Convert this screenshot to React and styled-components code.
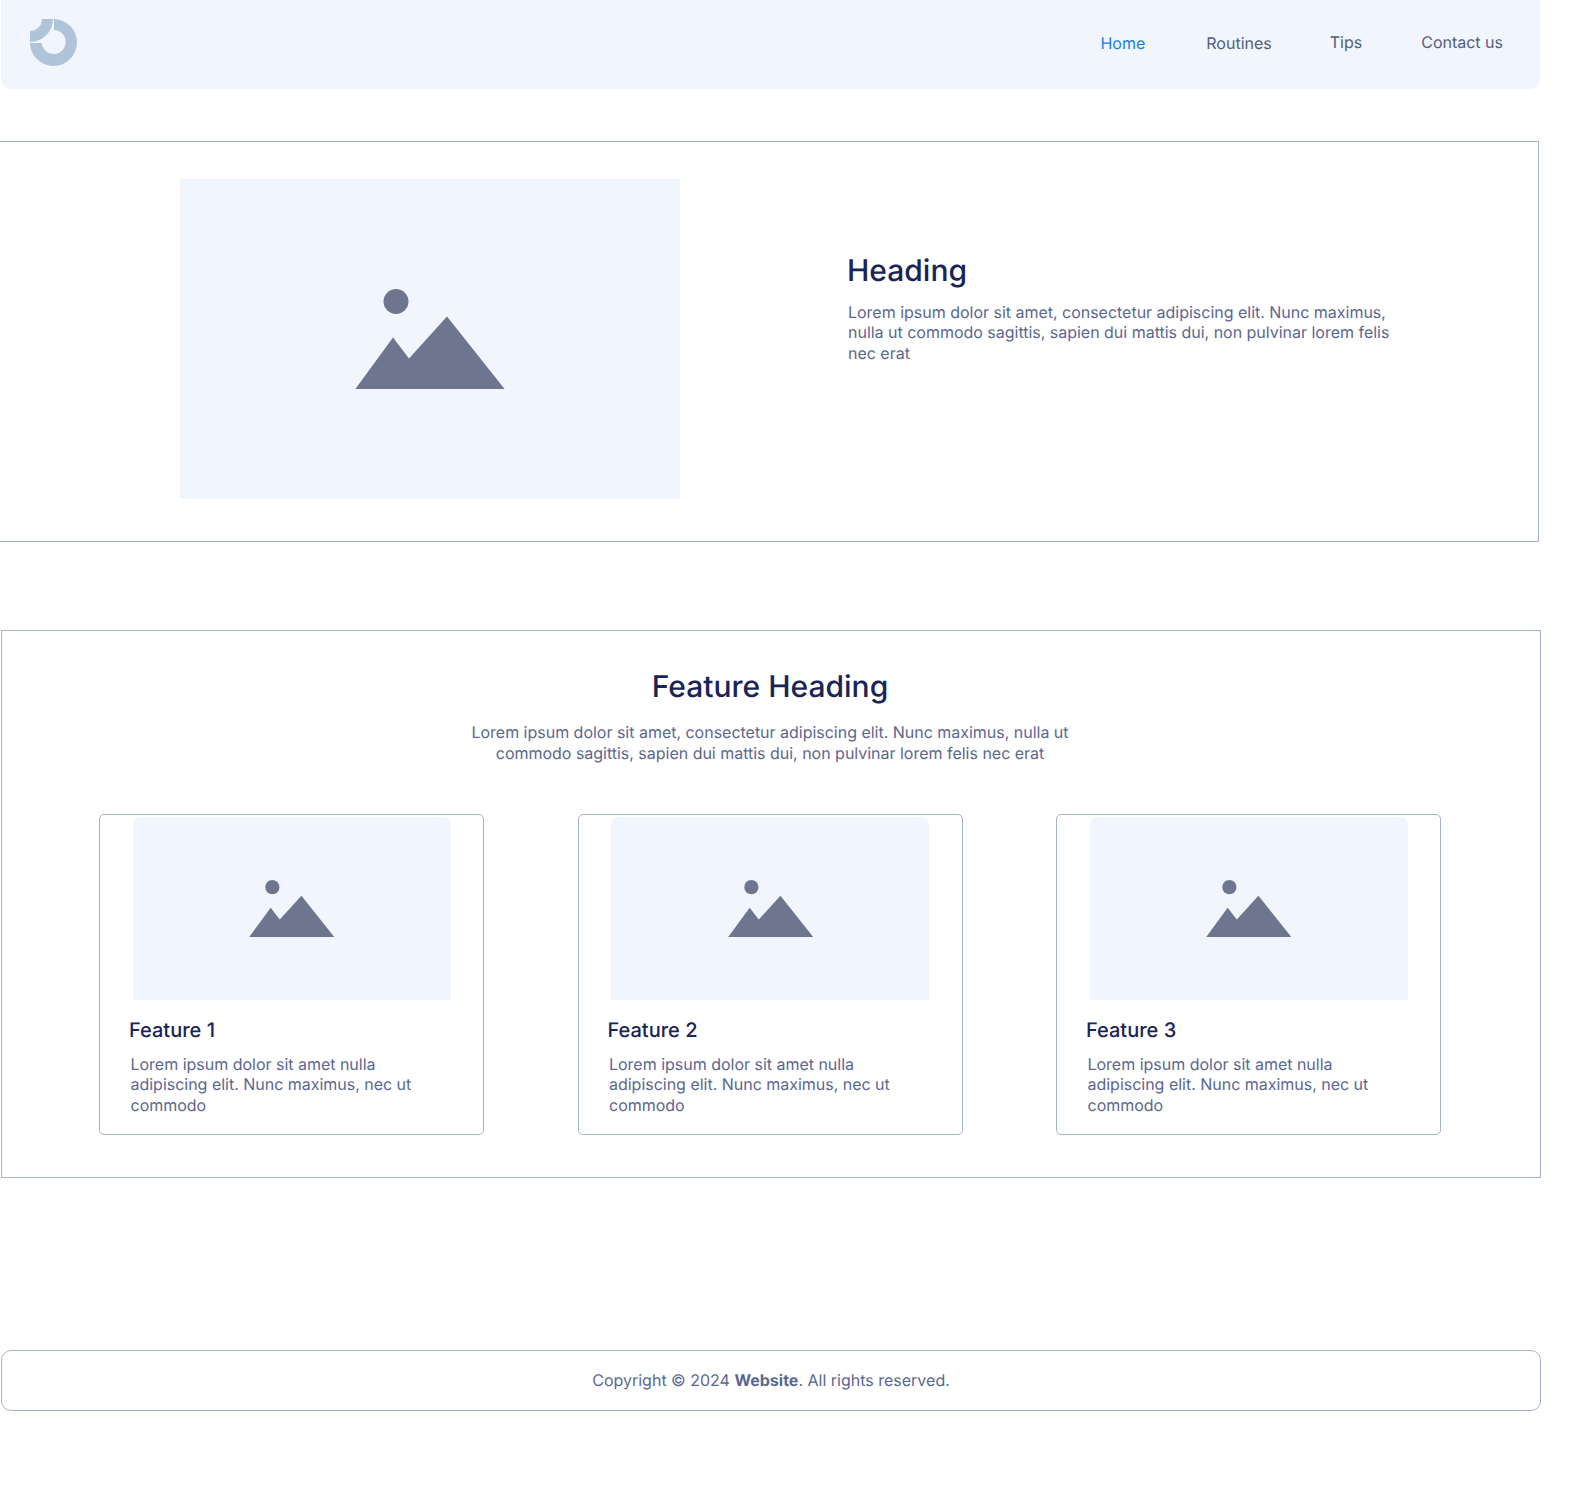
import React from 'react'
import styled, { createGlobalStyle } from 'styled-components'

const GlobalStyle = createGlobalStyle`
  html, body {
    margin: 0;
    padding: 0;
    background: #ffffff;
  }
  body {
    font-family: Inter, "Liberation Sans", sans-serif;
    color: #5b6790;
    text-rendering: geometricPrecision;
  }
  * {
    box-sizing: border-box;
  }
`

const Page = styled.div`
  width: 1540px;
  margin-left: 1px;
  padding-bottom: 99px;
  display: flex;
  flex-direction: column;
`

const NavBar = styled.nav`
  width: 1539px;
  height: 89px;
  background: #f1f5fd;
  border-radius: 0 0 10px 10px;
  padding: 0 37px 0 29px;
  display: flex;
  align-items: center;
  justify-content: space-between;
`

const Logo = styled.svg`
  width: 47px;
  height: 47px;
  display: block;
  margin-top: -5px;
`

const NavLinks = styled.div`
  display: flex;
  margin-top: -5px;
`

const NavLink = styled.a`
  font-size: 16px;
  line-height: 20px;
  margin-left: ${p => p.$gap || 0}px;
  color: ${p => (p.$active ? '#1a7ee6' : '#515d7c')};
  position: relative;
  top: ${p => (p.$low ? '1px' : '0')};
`

const Hero = styled.section`
  height: 401px;
  width: 1540px;
  margin: 52px 0 0 -2px;
  border: 1px solid #a9b2cc;
  padding: 37px 0 0 180px;
  display: flex;
  align-items: flex-start;
`

const HeroImage = styled.div`
  width: 500px;
  height: 320px;
  background: #f1f5fd;
  display: flex;
  align-items: center;
  justify-content: center;
`

const HeroText = styled.div`
  width: 550px;
  margin: 74px 0 0 168px;
`

const HeroHeading = styled.h1`
  margin: 0 0 12.900px -1px;
  font-size: 30px;
  line-height: 36px;
  font-weight: 500;
  color: #1a2456;
`

const Body = styled.p`
  margin: 0;
  font-size: 16px;
  line-height: 20.500px;
  letter-spacing: -0.015px;
  color: #5b6790;
`

const Features = styled.section`
  height: 548px;
  margin-top: 88px;
  border: 1px solid #a9b2cc;
  padding: 38px 99px 0 97px;
  display: flex;
  flex-direction: column;
  align-items: center;
`

const FeatureHeading = styled.h2`
  margin: 0 0 17px;
  font-size: 30px;
  line-height: 36px;
  font-weight: 500;
  color: #1a2456;
`

const FeatureIntro = styled(Body)`
  width: 620px;
  text-align: center;
`

const CardRow = styled.div`
  width: 100%;
  margin-top: 51px;
  display: grid;
  grid-template-columns: repeat(3, 385px);
  justify-content: space-between;
`

const Card = styled.article`
  height: 321px;
  border: 1px solid #a9b2cc;
  border-radius: 5px;
  padding: 2px 0 0 29px;
`

const CardImage = styled.div`
  width: 318px;
  height: 183px;
  margin-left: 3.750px;
  background: #f1f5fd;
  border-radius: 8px 8px 0 0;
  display: flex;
  align-items: center;
  justify-content: center;
`

const CardTitle = styled.h3`
  margin: 18px 0 11.900px;
  font-size: 20px;
  line-height: 24px;
  font-weight: 500;
  color: #1a2456;
`

const CardText = styled(Body)`
  width: 300px;
  margin-left: 1.500px;
`

const Footer = styled.footer`
  height: 61px;
  margin-top: 172px;
  border: 1px solid #a9b2cc;
  border-radius: 10px;
  padding-bottom: 2px;
  display: flex;
  align-items: center;
  justify-content: center;
  font-size: 16px;
  color: #5b6790;
`

const MountainIcon = ({ width }) => (
  <svg width={width} viewBox="0 0 150 100.500" style={{ display: 'block' }}>
    <circle cx="41" cy="12.500" r="12.500" fill="#6e758e" />
    <path d="M0 100.500 L38 48.500 L54 69.500 L92 27.500 L150 100.500 Z" fill="#6e758e" />
  </svg>
)

const features = ['Feature 1', 'Feature 2', 'Feature 3']

const App = () => {
  return (
    <Page>
      <GlobalStyle />
      <NavBar>
        <Logo viewBox="0 0 47 47">
          <path d="M24 0 A23.500 23.500 0 1 1 0 24 L11.700 24 A12 12 0 1 0 24 11 Z" fill="#b0c4d9" />
          <path d="M23 0 A23 23 0 0 1 0 23 L0 12 A12 12 0 0 0 12 0 Z" fill="#b0c4d9" />
        </Logo>
        <NavLinks>
          <NavLink $active $low>Home</NavLink>
          <NavLink $low $gap={61}>Routines</NavLink>
          <NavLink $gap={58}>Tips</NavLink>
          <NavLink $gap={59}>Contact us</NavLink>
        </NavLinks>
      </NavBar>

      <Hero>
        <HeroImage>
          <MountainIcon width={150} />
        </HeroImage>
        <HeroText>
          <HeroHeading>Heading</HeroHeading>
          <Body>
            Lorem ipsum dolor sit amet, consectetur adipiscing elit. Nunc maximus, nulla ut commodo sagittis, sapien dui mattis dui, non pulvinar lorem felis nec erat
          </Body>
        </HeroText>
      </Hero>

      <Features>
        <FeatureHeading>Feature Heading</FeatureHeading>
        <FeatureIntro>
          Lorem ipsum dolor sit amet, consectetur adipiscing elit. Nunc maximus, nulla ut commodo sagittis, sapien dui mattis dui, non pulvinar lorem felis nec erat
        </FeatureIntro>
        <CardRow>
          {features.map(title => (
            <Card key={title}>
              <CardImage>
                <MountainIcon width={85.500} />
              </CardImage>
              <CardTitle>{title}</CardTitle>
              <CardText>Lorem ipsum dolor sit amet nulla adipiscing elit. Nunc maximus, nec ut commodo</CardText>
            </Card>
          ))}
        </CardRow>
      </Features>

      <Footer>
        <span>Copyright © 2024 <b>Website</b>. All rights reserved.</span>
      </Footer>
    </Page>
  )
}

export default App
